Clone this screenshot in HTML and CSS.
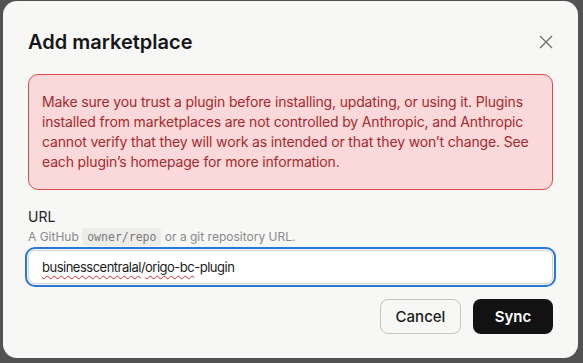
FILE: index.html
```html
<!DOCTYPE html>
<html lang="en">
<head>
    <meta charset="UTF-8">
    <meta name="viewport" content="width=device-width, initial-scale=1.0">
    <title>Add marketplace</title>
    <link rel="stylesheet" href="styles.css">
</head>
<body>
    <div class="dialog">
        <div class="dialog-header">
            <h1>Add marketplace</h1>
            <button class="close-btn" aria-label="Close">
                <svg width="14" height="14" viewBox="0 0 14 14">
                    <path d="M1 1 L13 13 M13 1 L1 13" stroke="#6b6b6b" stroke-width="1.2" fill="none"/>
                </svg>
            </button>
        </div>

        <div class="warning">
            Make sure you trust a plugin before installing, updating, or using it. Plugins installed from marketplaces are not controlled by Anthropic, and Anthropic cannot verify that they will work as intended or that they won’t change. See each plugin’s homepage for more information.
        </div>

        <div class="field">
            <label class="field-label">URL</label>
            <div class="field-help">A GitHub <code>owner/repo</code> or a git repository URL.</div>
            <div class="field-input"><span class="typo">businesscentralal</span>/<span class="typo">origo-bc</span>-plugin</div>
        </div>

        <div class="actions">
            <button class="btn btn-cancel">Cancel</button>
            <button class="btn btn-sync">Sync</button>
        </div>
    </div>
</body>
</html>
```

FILE: styles.css
```css
body {
    margin: 0;
    padding: 1px 5px 5px 3px;
    background-color: #525252;
    font-family: 'Inter', 'Liberation Sans', sans-serif;
    color: #1a1a1a;
}

.dialog {
    width: 575px;
    box-sizing: border-box;
    height: 357px;
    background: #f7f7f6;
    border-radius: 14px;
    padding: 27px 25px 24px 25px;
}

.dialog-header {
    display: flex;
    justify-content: space-between;
    align-items: center;
    height: 28px;
}

h1 {
    margin: 0;
    font-size: 20px;
    font-weight: 600;
    line-height: 28px;
    color: #161616;
}

.close-btn {
    background: transparent;
    border: none;
    padding: 0;
    margin-right: -5px;
    width: 24px;
    height: 24px;
    display: flex;
    align-items: center;
    justify-content: center;
    cursor: pointer;
}

.warning {
    margin-top: 18px;
    background: #fbd8d9;
    border: 1px solid #d94a4f;
    border-radius: 10px;
    padding: 17px 13px;
    color: #a52a2f;
    font-size: 14px;
    letter-spacing: -0.15px;
    line-height: 20px;
}

.field {
    margin-top: 17px;
}

.field-label {
    display: block;
    font-size: 14px;
    line-height: 20px;
    color: #222;
}

.field-help {
    font-size: 12px;
    line-height: 20px;
    color: #8a8a8a;
}

.field-help code {
    font-family: 'DejaVu Sans Mono', monospace;
    font-size: 11.5px;
    background: #ececeb;
    border-radius: 4px;
    padding: 2px 5px;
    color: #7a7a7a;
}

.field-input {
    margin-top: 3px;
    height: 34px;
    box-sizing: border-box;
    background: #fff;
    border: 1px solid #d4d4d4;
    border-radius: 7px;
    box-shadow: 0 0 0 1px #f4f7fb, 0 0 0 3px #2a78d6;
    padding: 0 13px;
    display: flex;
    align-items: center;
    font-size: 13px;
    letter-spacing: -0.5px;
    color: #1a1a1a;
}

.typo {
    text-decoration: underline wavy #e0252b;
    text-decoration-thickness: 1px;
    text-underline-offset: 3px;
}

.actions {
    margin-top: 15px;
    display: flex;
    justify-content: flex-end;
    gap: 12px;
}

.btn {
    height: 35px;
    width: 80px;
    border-radius: 8px;
    font-family: 'Inter', 'Liberation Sans', sans-serif;
    font-size: 15px;
    cursor: pointer;
}

.btn-cancel {
    width: 81px;
    background: transparent;
    border: 1px solid #c4c4c4;
    color: #1a1a1a;
    font-weight: 500;
}

.btn-sync {
    background: #121212;
    border: none;
    color: #fff;
    font-weight: 600;
}
```
